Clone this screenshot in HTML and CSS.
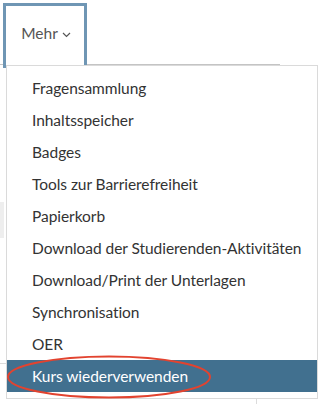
FILE: index.html
```html
<!DOCTYPE html>
<html lang="de">
<head>
<meta charset="utf-8">
<link rel="stylesheet" href="styles.css">
</head>
<body>
<div class="page">
  <div class="header">
    <div class="tab">Mehr <svg class="chev" width="9" height="6" viewBox="0 0 9 6"><path d="M1 1 L4.5 4.5 L8 1" fill="none" stroke="#555" stroke-width="1.2"/></svg></div>
  </div>
  <div class="side-box"></div>
  <div class="side-line"></div>
  <div class="bottom-line"></div>
  <ul class="menu">
    <li class="item">Fragensammlung</li>
    <li class="item">Inhaltsspeicher</li>
    <li class="item">Badges</li>
    <li class="item">Tools zur Barrierefreiheit</li>
    <li class="item">Papierkorb</li>
    <li class="item">Download der Studierenden-Aktivitäten</li>
    <li class="item">Download/Print der Unterlagen</li>
    <li class="item">Synchronisation</li>
    <li class="item">OER</li>
    <li class="item active">Kurs wiederverwenden</li>
  </ul>
  <svg class="mark" width="206" height="45" viewBox="0 0 206 45"><ellipse cx="103" cy="22" rx="101" ry="20.5" fill="none" stroke="#e2432f" stroke-width="2"/></svg>
</div>
</body>
</html>
```
FILE: styles.css
```css
html, body {
  margin: 0;
  padding: 0;
  background: #fff;
}
.page {
  position: relative;
  width: 322px;
  height: 404px;
  overflow: hidden;
  font-family: "Lato", "Open Sans", sans-serif;
}
.header {
  width: 280px;
  height: 65px;
  border-bottom: 1px solid #c4c4c4;
  padding-left: 3px;
  padding-top: 3px;
  box-sizing: border-box;
}
.tab {
  width: 84px;
  height: 65px;
  box-sizing: border-box;
  border: 3px solid #6f96b4;
  border-bottom: none;
  display: flex;
  align-items: flex-start;
  justify-content: center;
  padding-top: 18px;
  padding-left: 2px;
  gap: 4px;
  font-size: 15.5px;
  color: #555;
  background: #fff;
  position: relative;
}
.chev {
  margin-top: 8px;
}
.side-box {
  position: absolute;
  left: 0;
  top: 202px;
  width: 4px;
  height: 36px;
  background: #eeeeee;
}
.side-line {
  position: absolute;
  left: 0;
  top: 363px;
  width: 6px;
  height: 1px;
  background: #dcdcdc;
}
.bottom-line {
  position: absolute;
  left: 256px;
  top: 399px;
  width: 1px;
  height: 6px;
  background: #dcdcdc;
}
.menu {
  position: absolute;
  left: 6px;
  top: 65px;
  width: 312px;
  box-sizing: border-box;
  margin: 0;
  padding: 6px 0 6px 0;
  list-style: none;
  border: 1px solid #dadada;
  background: #fff;
  z-index: 2;
}
.item {
  height: 32px;
  line-height: 32px;
  padding-left: 25px;
  font-size: 15.5px;
  letter-spacing: -0.05px;
  color: #333;
  white-space: nowrap;
}
.item.active {
  background: #41708f;
  color: #fff;
}
.mark {
  position: absolute;
  left: 6px;
  top: 355px;
  z-index: 3;
}
```
